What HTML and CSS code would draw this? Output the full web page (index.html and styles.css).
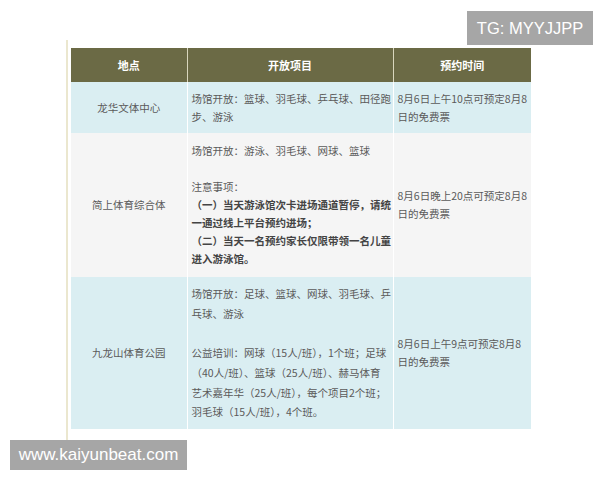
FILE: index.html
```html
<!DOCTYPE html>
<html lang="zh">
<head>
<meta charset="utf-8">
<link rel="stylesheet" href="styles.css">
</head>
<body>
<div class="page">
  <div class="article">
    <table class="venues">
      <colgroup>
        <col class="c1"><col class="c2"><col class="c3">
      </colgroup>
      <thead>
        <tr><th>地点</th><th>开放项目</th><th>预约时间</th></tr>
      </thead>
      <tbody>
        <tr class="blue r1">
          <td class="place">龙华文体中心</td>
          <td class="items">场馆开放：篮球、羽毛球、乒乓球、田径跑<br>步、游泳</td>
          <td class="time">8月6日上午10点可预定8月8<br>日的免费票</td>
        </tr>
        <tr class="grey r2">
          <td class="place">简上体育综合体</td>
          <td class="items">场馆开放：游泳、羽毛球、网球、篮球<br>&nbsp;<br>注意事项：<br><b>（一）当天游泳馆次卡进场通道暂停，请统<br>一通过线上平台预约进场；<br>（二）当天一名预约家长仅限带领一名儿童<br>进入游泳馆。</b></td>
          <td class="time">8月6日晚上20点可预定8月8<br>日的免费票</td>
        </tr>
        <tr class="blue r3">
          <td class="place">九龙山体育公园</td>
          <td class="items">场馆开放：足球、篮球、网球、羽毛球、乒<br>乓球、游泳<br>&nbsp;<br>公益培训：网球（15人/班），1个班；足球<br>（40人/班）、篮球（25人/班）、赫马体育<br>艺术嘉年华（25人/班），每个项目2个班；<br>羽毛球（15人/班），4个班。</td>
          <td class="time">8月6日上午9点可预定8月8<br>日的免费票</td>
        </tr>
      </tbody>
    </table>
  </div>
  <div class="wm wm-top">TG: MYYJJPP</div>
  <div class="wm wm-bottom">www.kaiyunbeat.com</div>
</div>
</body>
</html>
```

FILE: styles.css
```css
html, body {
  margin: 0;
  padding: 0;
  background: #ffffff;
}
body {
  width: 600px;
  height: 480px;
  overflow: hidden;
  font-family: "Noto Sans CJK SC", "Noto Sans", sans-serif;
}
.page {
  position: relative;
  width: 600px;
  height: 480px;
  padding-top: 40px;
  box-sizing: border-box;
}
.article {
  margin-left: 66px;
  padding-top: 8px;
  padding-bottom: 24px;
  padding-left: 3px;
  border-left: 2px solid #ebe7cf;
  width: 470px;
}
.venues {
  border-collapse: collapse;
  table-layout: fixed;
  width: 459px;
  font-size: 10.5px;
  color: #5a5a5a;
}
.c1 { width: 116px; }
.c2 { width: 206px; }
.c3 { width: 138px; }
.venues th {
  background: #6b6a45;
  color: #ffffff;
  font-weight: bold;
  font-size: 11px;
  height: 34px;
  padding: 0;
  border-left: 1px solid #d9d6bd;
  text-align: center;
}
.venues th:first-child { border-left: none; }
.venues td {
  padding: 0 2px 0 4px;
  vertical-align: middle;
  white-space: nowrap;
  border-left: 1px solid #ffffff;
  line-height: 18px;
}
.venues td:first-child { border-left: none; }
.venues td.place { text-align: center; padding: 0; }
.blue td { background: #daeef2; }
.grey td { background: #f5f5f5; }
.r1 td { height: 51px; }
.r2 td { height: 144px; }
.r3 td { height: 152px; }
.r3 td.items { line-height: 19.8px; }
.items b { color: #444; font-weight: bold; }
.wm {
  position: absolute;
  background: #a6a6a6;
  color: #ffffff;
  font-family: "Liberation Sans", Arial, sans-serif;
  display: flex;
  align-items: center;
  justify-content: center;
}
.wm-top {
  left: 467px;
  top: 11px;
  width: 126px;
  height: 34px;
  font-size: 16.5px;
}
.wm-bottom {
  left: 10px;
  top: 440px;
  width: 177px;
  height: 30px;
  font-size: 17px;
}
```
